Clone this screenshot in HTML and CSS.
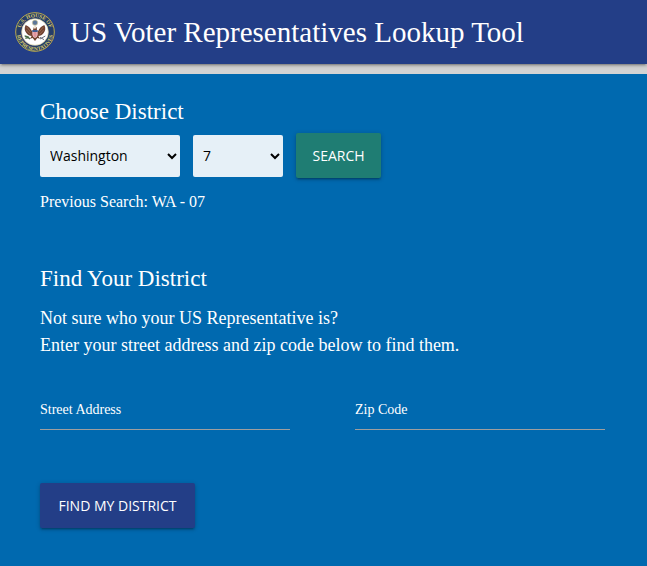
FILE: index.html
```html
<!DOCTYPE html>
<html lang="en">
<head>
<meta charset="utf-8">
<meta name="viewport" content="width=device-width, initial-scale=1">
<title>US Voter Representatives Lookup Tool</title>
<link rel="stylesheet" href="styles.css">
</head>
<body>
<header class="site-header">
  <svg class="seal" viewBox="0 0 120 120" aria-hidden="true">
    <defs>
      <path id="arc-top" d="M17 74A45 45 0 1 1 103 74"/>
      <path id="arc-bottom" d="M6 62A54 54 0 0 0 114 62"/>
    </defs>
    <circle cx="60" cy="60" r="58" fill="#263d69" stroke="#b8a84e" stroke-width="3"/>
    <text class="seal-text"><textPath href="#arc-top" startOffset="50%" text-anchor="middle">U.S. HOUSE OF</textPath></text>
    <text class="seal-text"><textPath href="#arc-bottom" startOffset="50%" text-anchor="middle">REPRESENTATIVES</textPath></text>
    <circle cx="60" cy="60" r="40" fill="#fff" stroke="#d8cf9d" stroke-width="2"/>
    <circle cx="60" cy="32" r="8" fill="#5b7699" stroke="#d8cf9d" stroke-width="2"/>
    <path d="M50 56C46 50 43 43 32 39C27 48 29 57 34 63C38 69 44 72 50 72L45 80L53 78L60 87L67 78L75 80L70 72C76 72 82 69 86 63C91 57 93 48 88 39C77 43 74 50 70 56Z" fill="#714331"/>
    <path d="M35 45L47 60M34 54L46 67M85 45L73 60M86 54L74 67" stroke="#a8775a" stroke-width="2"/>
    <path d="M54 55L56 46Q60 41 65 46L66 55Z" fill="#714331"/>
    <path d="M55 49L57 43Q61 41 64 45L61 50Z" fill="#f4ead7"/>
    <path d="M52 55H68V68Q66 75 60 78Q54 75 52 68Z" fill="#f6e5e6"/>
    <path d="M54 60V72M58 60V76M62 60V76M66 60V72" stroke="#cf5461" stroke-width="2"/>
    <path d="M52 54H68V60H52Z" fill="#3c5a90"/>
    <path d="M29 72Q37 72 45 81M31 79L42 75" fill="none" stroke="#496b46" stroke-width="4"/>
    <path d="M75 81L91 72M75 76L87 83" stroke="#6c7180" stroke-width="3"/>
  </svg>
  <h1 class="site-title">US Voter Representatives Lookup Tool</h1>
</header>
<main class="content">
  <section class="choose">
    <h2 class="heading">Choose District</h2>
    <form class="search-row">
      <select class="select select-state" aria-label="State"><option>Washington</option></select>
      <select class="select select-district" aria-label="District"><option>7</option></select>
      <button class="button button-search" type="button">SEARCH</button>
    </form>
    <p class="previous">Previous Search: WA - 07</p>
  </section>
  <section class="find">
    <h2 class="heading">Find Your District</h2>
    <p class="intro">Not sure who your US Representative is?<br>Enter your street address and zip code below to find them.</p>
    <form>
      <div class="fields">
        <div class="field">
          <input class="field-input" id="street" type="text">
          <label class="field-label" for="street">Street Address</label>
        </div>
        <div class="field">
          <input class="field-input" id="zip" type="text">
          <label class="field-label" for="zip">Zip Code</label>
        </div>
      </div>
      <button class="button button-find" type="button">FIND MY DISTRICT</button>
    </form>
  </section>
</main>
</body>
</html>
```

FILE: styles.css
```css
* {
  box-sizing: border-box;
}

body {
  display: flex;
  flex-direction: column;
  min-height: 100vh;
  margin: 0;
  background: #d3d3d3;
  color: #fff;
  font-family: "Liberation Serif", "Times New Roman", serif;
}

h1, h2, p {
  margin: 0;
  font-weight: 400;
}

.site-header {
  display: flex;
  align-items: center;
  gap: 15px;
  min-height: 64px;
  padding: 0 15px;
  background: #233e87;
  box-shadow: 0 2px 2px rgba(0, 0, 0, .14), 0 3px 1px -2px rgba(0, 0, 0, .12), 0 1px 5px rgba(0, 0, 0, .2);
}

.seal {
  flex: none;
  width: 40px;
  height: 40px;
}

.seal-text {
  fill: #d9ca69;
  font-size: 16px;
  font-weight: 700;
}

.site-title {
  font-size: 29px;
  line-height: 64px;
}

.content {
  flex: 1;
  margin-top: 10px;
  padding: 25px 40px 36px;
  background: #0069af;
}

.heading {
  font-size: 23px;
  line-height: 26px;
}

.search-row {
  display: flex;
  flex-wrap: wrap;
  align-items: center;
  gap: 13px;
  margin-top: 8px;
}

.select {
  height: 42px;
  padding: 5px 5px 5px 6px;
  border: 0;
  border-radius: 2px;
  background: #e6f0f7;
  color: #000;
  font-family: "Open Sans", sans-serif;
  font-size: 14px;
}

.select-state {
  width: 140px;
}

.select-district {
  width: 90px;
}

.button {
  height: 45px;
  padding: 0 16px;
  border: 0;
  border-radius: 2px;
  color: #fff;
  font-family: "Open Sans", sans-serif;
  font-size: 14px;
  box-shadow: 0 2px 2px rgba(0, 0, 0, .14), 0 3px 1px -2px rgba(0, 0, 0, .12), 0 1px 5px rgba(0, 0, 0, .2);
}

.button-search {
  min-width: 85px;
  background: #1f7d73;
}

.button-find {
  min-width: 155px;
  margin-top: 53px;
  background: #233e87;
}

.previous {
  margin-top: 12px;
  font-size: 16px;
  line-height: 24px;
}

.find {
  margin-top: 52px;
}

.intro {
  margin-top: 13px;
  font-size: 18px;
  line-height: 27px;
}

.fields {
  display: grid;
  grid-template-columns: repeat(auto-fit, 250px);
  gap: 24px 65px;
  margin-top: 27px;
}

.field {
  position: relative;
}

.field-input {
  display: block;
  width: 100%;
  height: 44px;
  padding: 0;
  border: 0;
  border-bottom: 1px solid #9e9e9e;
  background: transparent;
  color: #fff;
  font: inherit;
}

.field-label {
  position: absolute;
  top: 12px;
  left: 0;
  font-size: 14px;
  line-height: 24px;
}
```
